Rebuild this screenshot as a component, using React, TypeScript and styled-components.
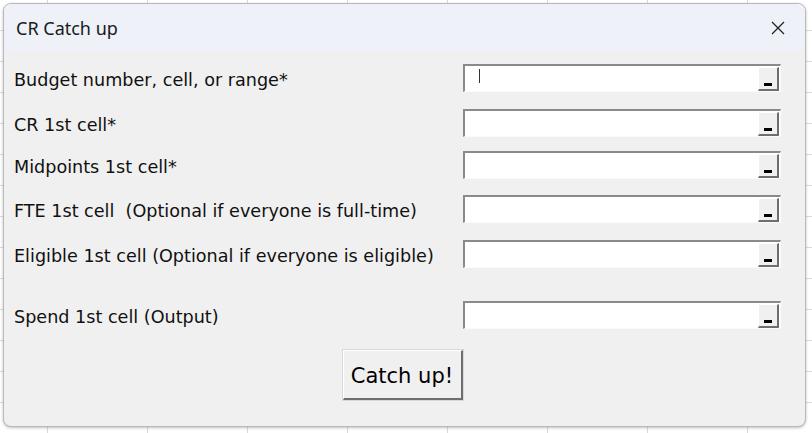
import React from "react";
import styled, { createGlobalStyle } from "styled-components";

const Global = createGlobalStyle`
  html, body { margin: 0; padding: 0; }
  body {
    width: 812px;
    height: 433px;
    overflow: hidden;
    background-color: #ffffff;
    background-image:
      repeating-linear-gradient(to right, transparent 0 47px, #dadada 47px 48px, transparent 48px 100px),
      repeating-linear-gradient(to bottom, transparent 0 30px, #dadada 30px 31px, transparent 31px 31px);
  }
`;

const Window = styled.div`
  margin: 3px 0 0 3px;
  width: 803px;
  height: 424px;
  box-sizing: border-box;
  border: 1px solid #b9b9b9;
  border-radius: 8px;
  overflow: hidden;
  background: #f0f0f0;
  box-shadow: 0 1px 3px rgba(0, 0, 0, 0.25);
  display: flex;
  flex-direction: column;
`;

const TitleBar = styled.div`
  height: 47px;
  flex: none;
  background: #eef2f8;
  display: flex;
  align-items: center;
  justify-content: space-between;
  padding: 0 20px 0 12px;
`;

const Title = styled.span`
  font-family: "Noto Sans", "Open Sans", sans-serif;
  font-size: 18px;
  color: #1a1a1a;
  padding-top: 1px;
`;

const CloseIcon = styled.svg`
  width: 14px;
  height: 14px;
  display: block;
`;

const Body = styled.div`
  flex: 1;
  display: flex;
  flex-direction: column;
  padding: 13px 24px 0 10px;
`;

const Row = styled.div<{ $gap: number }>`
  display: flex;
  align-items: center;
  justify-content: space-between;
  height: 28px;
  margin-top: ${(p) => p.$gap}px;
`;

const Label = styled.span`
  font-family: "DejaVu Sans", Verdana, sans-serif;
  font-size: 17.6px;
  color: #111;
  padding-top: 4px;
  white-space: pre;
`;

const Field = styled.div`
  position: relative;
  width: 318px;
  height: 28px;
  box-sizing: border-box;
  background: #fff;
  border-style: solid;
  border-width: 2px 1px 1px 2px;
  border-color: #8a8a8a #fafafa #fafafa #8a8a8a;
  display: flex;
  justify-content: flex-end;
  align-items: stretch;
`;

const Caret = styled.span`
  position: absolute;
  left: 14px;
  top: 3px;
  width: 1px;
  height: 14px;
  background: #333;
`;

const PickButton = styled.div`
  width: 21px;
  margin: 1px 1px 0 0;
  box-sizing: border-box;
  background: #f0f0f0;
  border-style: solid;
  border-width: 1px 2px 2px 1px;
  border-color: #ffffff #6e6e6e #6e6e6e #ffffff;
  display: flex;
  align-items: flex-end;
  justify-content: center;
  padding-bottom: 3px;
`;

const Bar = styled.span`
  width: 8px;
  height: 3px;
  background: #000;
`;

const Footer = styled.div`
  display: flex;
  justify-content: center;
  margin-top: 21px;
  padding-left: 10px;
`;

const ActionButton = styled.button`
  width: 120px;
  height: 50px;
  box-sizing: border-box;
  background: #f0f0f0;
  border-style: solid;
  border-width: 1px 2px 2px 1px;
  border-color: #ffffff #6e6e6e #6e6e6e #ffffff;
  outline: 1px solid #d8d8d8;
  font-family: "DejaVu Sans", Verdana, sans-serif;
  font-size: 21px;
  color: #000;
  padding: 2px 0 0;
  cursor: default;
`;

const rows = [
  { label: "Budget number, cell, or range*", gap: 0, caret: true },
  { label: "CR 1st cell*", gap: 17, caret: false },
  { label: "Midpoints 1st cell*", gap: 14, caret: false },
  { label: "FTE 1st cell  (Optional if everyone is full-time)", gap: 16, caret: false },
  { label: "Eligible 1st cell (Optional if everyone is eligible)", gap: 17, caret: false },
  { label: "Spend 1st cell (Output)", gap: 33, caret: false },
];

export default function App() {
  return (
    <>
      <Global />
      <Window>
        <TitleBar>
          <Title>CR Catch up</Title>
          <CloseIcon viewBox="0 0 14 14">
            <path d="M1 1 L13 13 M13 1 L1 13" stroke="#222" strokeWidth="1.3" fill="none" />
          </CloseIcon>
        </TitleBar>
        <Body>
          {rows.map((r) => (
            <Row key={r.label} $gap={r.gap}>
              <Label>{r.label}</Label>
              <Field>
                {r.caret && <Caret />}
                <PickButton>
                  <Bar />
                </PickButton>
              </Field>
            </Row>
          ))}
          <Footer>
            <ActionButton>Catch up!</ActionButton>
          </Footer>
        </Body>
      </Window>
    </>
  );
}
